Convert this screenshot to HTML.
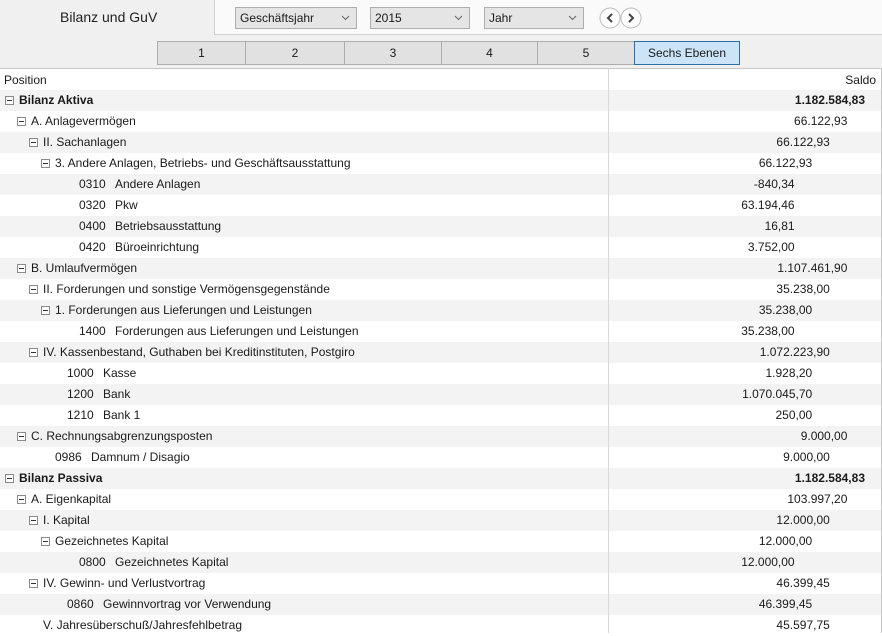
<!DOCTYPE html>
<html><head><meta charset="utf-8"><style>
*{margin:0;padding:0;box-sizing:border-box}
body{width:882px;height:633px;overflow:hidden;background:#fff;font-family:"Liberation Sans",sans-serif;font-size:12px;color:#1a1a1a;position:relative}
.a{position:absolute;white-space:nowrap}
.dd{position:absolute;top:7px;height:22px;border:1px solid #adadad;background:#e5e5e5;padding:3px 4px;font-size:12px}
.dd svg{position:absolute;right:6px;top:7px}
.btn{position:absolute;top:41px;height:24px;background:#e1e1e1;border:1px solid #adadad;text-align:center;line-height:22px}
.row{position:absolute;left:0;width:881px;height:21px}
.g{background:#f3f3f3}
.ic{position:absolute;width:9px;height:9px;border:1px solid #8a8a8a;background:#fff;top:6px}
.ic:after{content:"";position:absolute;left:1px;top:3px;width:5px;height:1px;background:#333}
.t{position:absolute;top:3px;white-space:nowrap}
.m{position:absolute;top:3px;white-space:nowrap;text-align:right}
.b{font-weight:bold}
</style></head><body>
<div class="a" style="left:0;top:0;width:214px;height:69px;background:#f0f0f0"></div>
<div class="a" style="left:214px;top:0;width:668px;height:35px;background:#fafafa;border-left:1px solid #d0d0d0;border-bottom:1px solid #d0d0d0"></div>
<div class="a" style="left:0;top:35px;width:882px;height:34px;background:#f0f0f0;border-bottom:1px solid #c8c8c8"></div>
<div class="a" style="left:60px;top:9px;font-size:14px;color:#222">Bilanz und GuV</div>
<div class="dd" style="left:235px;width:122px">Geschäftsjahr<svg width="9" height="6"><path d="M1 1l3.5 3.5L8 1" stroke="#666" fill="none"/></svg></div>
<div class="dd" style="left:370px;width:100px">2015<svg width="9" height="6"><path d="M1 1l3.5 3.5L8 1" stroke="#666" fill="none"/></svg></div>
<div class="dd" style="left:484px;width:100px">Jahr<svg width="9" height="6"><path d="M1 1l3.5 3.5L8 1" stroke="#666" fill="none"/></svg></div>
<svg class="a" style="left:599px;top:7px" width="45" height="22"><circle cx="11" cy="11" r="10" fill="#fff" stroke="#bbb"/><circle cx="32" cy="11" r="10" fill="#fff" stroke="#bbb"/><path d="M13 7l-4 4 4 4M30 7l4 4-4 4" stroke="#444" stroke-width="2" fill="none"/></svg>
<div class="btn" style="left:157px;width:89px">1</div>
<div class="btn" style="left:245px;width:100px">2</div>
<div class="btn" style="left:344px;width:98px">3</div>
<div class="btn" style="left:441px;width:97px">4</div>
<div class="btn" style="left:537px;width:98px">5</div>
<div class="btn" style="left:634px;width:106px;background:#cce4f7;border-color:#2b6ea8">Sechs Ebenen</div>
<div class="a" style="left:0;top:69px;width:882px;height:564px;border-right:1px solid #c8c8c8"></div>
<div class="a" style="left:4px;top:73px">Position</div>
<div class="a" style="right:6px;top:73px">Saldo</div>
<div id="rows"></div>
<div class="a" style="left:608px;top:69px;width:1px;height:564px;background:#d8d8d8"></div>
<script>
var R=[
[0,0,"Bilanz Aktiva","1.182.584,83",1],
[0,1,"A. Anlagevermögen","66.122,93"],
[0,2,"II. Sachanlagen","66.122,93"],
[0,3,"3. Andere Anlagen, Betriebs- und Geschäftsausstattung","66.122,93"],
[1,4,"0310|Andere Anlagen","-840,34"],
[1,4,"0320|Pkw","63.194,46"],
[1,4,"0400|Betriebsausstattung","16,81"],
[1,4,"0420|Büroeinrichtung","3.752,00"],
[0,1,"B. Umlaufvermögen","1.107.461,90"],
[0,2,"II. Forderungen und sonstige Vermögensgegenstände","35.238,00"],
[0,3,"1. Forderungen aus Lieferungen und Leistungen","35.238,00"],
[1,4,"1400|Forderungen aus Lieferungen und Leistungen","35.238,00"],
[0,2,"IV. Kassenbestand, Guthaben bei Kreditinstituten, Postgiro","1.072.223,90"],
[1,3,"1000|Kasse","1.928,20"],
[1,3,"1200|Bank","1.070.045,70"],
[1,3,"1210|Bank 1","250,00"],
[0,1,"C. Rechnungsabgrenzungsposten","9.000,00"],
[1,2,"0986|Damnum / Disagio","9.000,00"],
[0,0,"Bilanz Passiva","1.182.584,83",1],
[0,1,"A. Eigenkapital","103.997,20"],
[0,2,"I. Kapital","12.000,00"],
[0,3,"Gezeichnetes Kapital","12.000,00"],
[1,4,"0800|Gezeichnetes Kapital","12.000,00"],
[0,2,"IV. Gewinn- und Verlustvortrag","46.399,45"],
[1,3,"0860|Gewinnvortrag vor Verwendung","46.399,45"],
[2,2,"V. Jahresüberschuß/Jahresfehlbetrag","45.597,75"]];
var h="";
R.forEach(function(r,i){
var y=90+21*i,d=r[1],s='<div class="row'+(i%2==0?' g':'')+'" style="top:'+y+'px">';
if(r[0]==0){s+='<div class="ic" style="left:'+(5+12*d)+'px"></div><div class="t'+(r[4]?' b':'')+'" style="left:'+(19+12*d)+'px">'+r[2]+'</div>';}
else if(r[0]==2){s+='<div class="t" style="left:'+(19+12*d)+'px">'+r[2]+'</div>';}
else{var p=r[2].split("|"),px=19+12*(d-1);s+='<div class="t" style="left:'+(px+24)+'px">'+p[0]+'</div><div class="t" style="left:'+(px+60)+'px">'+p[1]+'</div>';}
s+='<div class="m'+(r[4]?' b':'')+'" style="right:'+(16+17.6*d)+'px">'+r[3]+'</div></div>';
h+=s;});
document.getElementById("rows").innerHTML=h;
</script>
</body></html>
